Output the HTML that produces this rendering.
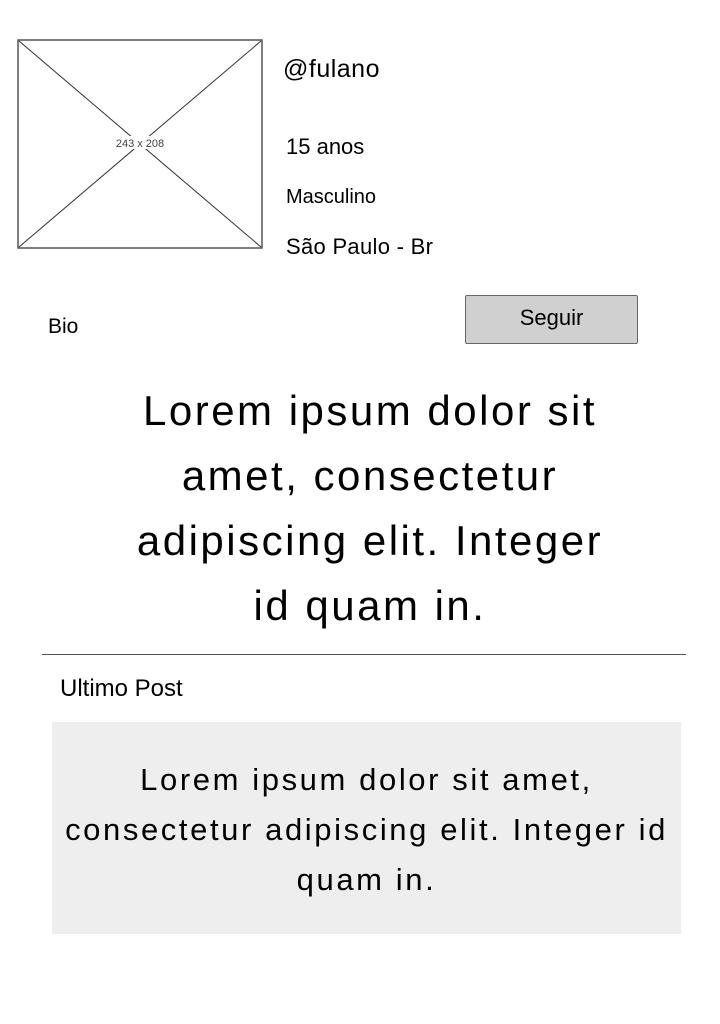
<!DOCTYPE html>
<html><head><meta charset="utf-8"><style>
body{margin:0;width:720px;height:1024px;background:#fff;position:relative;font-family:"Liberation Sans",sans-serif;color:#000;overflow:hidden}
.a{position:absolute;white-space:nowrap}
</style></head><body>
<svg class="a" style="left:17px;top:39px" width="247" height="211">
<rect x="1" y="1" width="244" height="208" fill="#fff" stroke="#555" stroke-width="1.5"/>
<line x1="2" y1="2" x2="244" y2="208" stroke="#333" stroke-width="1"/>
<line x1="244" y1="2" x2="2" y2="208" stroke="#333" stroke-width="1"/>
<rect x="92" y="97" width="62" height="13" fill="#fff"/>
<text x="123" y="108" font-size="11" text-anchor="middle" fill="#444" font-family="Liberation Sans,sans-serif">243 x 208</text>
</svg>
<div class="a" style="left:283px;top:55px;font-size:25px;letter-spacing:0.5px">@fulano</div>
<div class="a" style="left:286px;top:134px;font-size:22px">15 anos</div>
<div class="a" style="left:286px;top:186px;font-size:20px">Masculino</div>
<div class="a" style="left:286px;top:234px;font-size:22px;letter-spacing:0.3px">São Paulo - Br</div>
<div class="a" style="left:48px;top:315px;font-size:21px">Bio</div>
<div class="a" style="left:465px;top:295px;width:173px;height:49px;box-sizing:border-box;background:#d0d0d0;border:1px solid #666;border-radius:2px;text-align:center;font-size:22px;line-height:44px">Seguir</div>
<div class="a" style="left:50px;width:640px;top:378px;text-align:center;font-size:42px;line-height:65px;letter-spacing:2.5px">Lorem ipsum dolor sit<br>amet, consectetur<br>adipiscing elit. Integer<br>id quam in.</div>
<div class="a" style="left:42px;top:654px;width:644px;height:1px;background:#555"></div>
<div class="a" style="left:60px;top:675px;font-size:24px">Ultimo Post</div>
<div class="a" style="left:52px;top:722px;width:629px;height:212px;background:#eeeeee"></div>
<div class="a" style="left:12px;width:709px;top:755px;text-align:center;font-size:31px;line-height:50px;letter-spacing:2.6px">Lorem ipsum dolor sit amet,<br>consectetur adipiscing elit. Integer id<br>quam in.</div>
</body></html>
